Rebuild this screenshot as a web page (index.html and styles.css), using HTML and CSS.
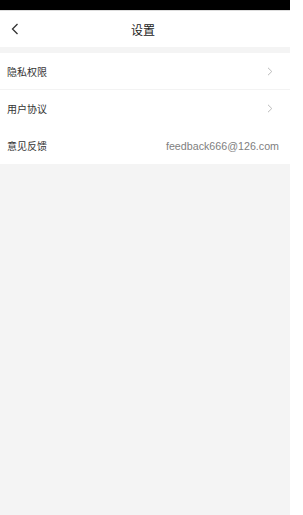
FILE: index.html
```html
<!DOCTYPE html>
<html lang="zh-CN">
<head>
<meta charset="UTF-8" />
<meta name="viewport" content="width=device-width, initial-scale=1" />
<title>设置</title>
<link rel="stylesheet" href="styles.css">
</head>
<body>
<div class="app">
  <div class="status-bar"></div>
  <header class="nav">
    <button class="back" aria-label="返回">
      <svg width="8" height="12" viewBox="0 0 8 12"><polyline points="6.5,1 1.5,6 6.5,11" fill="none" stroke="#333" stroke-width="1.3" /></svg>
    </button>
    <div class="nav-title">设置</div>
  </header>
  <ul class="list">
    <li class="item">
      <span class="label">隐私权限</span>
      <svg class="arrow" width="6" height="9" viewBox="0 0 6 9"><polyline points="1,0.8 4.8,4.5 1,8.2" fill="none" stroke="#bbb" stroke-width="1" /></svg>
    </li>
    <li class="item no-line">
      <span class="label">用户协议</span>
      <svg class="arrow" width="6" height="9" viewBox="0 0 6 9"><polyline points="1,0.8 4.8,4.5 1,8.2" fill="none" stroke="#bbb" stroke-width="1" /></svg>
    </li>
    <li class="item email">
      <span class="label">意见反馈</span>
      <span class="value">feedback666@126.com</span>
    </li>
  </ul>
</div>
</body>
</html>
```

FILE: styles.css
```css
* {
  box-sizing: border-box;
}
body {
  margin: 0;
  background: #fff;
  font-family: 'Liberation Sans', 'Noto Sans CJK SC', sans-serif;
  color: #333;
}
.app {
  width: 290px;
  height: 515px;
  background: #f4f4f4;
}
.status-bar {
  height: 11px;
  background: #000;
  border-bottom: 1px solid #ddd;
}
.nav {
  height: 36px;
  background: #fff;
  display: flex;
  align-items: center;
  justify-content: center;
  position: relative;
}
.back {
  position: absolute;
  left: 10px;
  top: 11px;
  border: none;
  background: none;
  padding: 0;
  width: 10px;
  height: 14px;
  display: flex;
  align-items: center;
  justify-content: center;
}
.nav-title {
  font-size: 12px;
  color: #222;
  margin-left: -4px;
}
.list {
  list-style: none;
  margin: 6px 0 0;
  padding: 0;
  background: #fff;
}
.item {
  height: 37px;
  padding: 0 17px 0 7px;
  display: flex;
  align-items: center;
  justify-content: space-between;
  border-bottom: 1px solid #f3f3f3;
}
.item.no-line,
.item.email {
  border-bottom: none;
}
.item.email {
  padding-right: 11px;
}
.label {
  font-size: 10px;
  color: #333;
}
.value {
  font-size: 10.7px;
  color: #808080;
}
.arrow {
  display: block;
}
```
